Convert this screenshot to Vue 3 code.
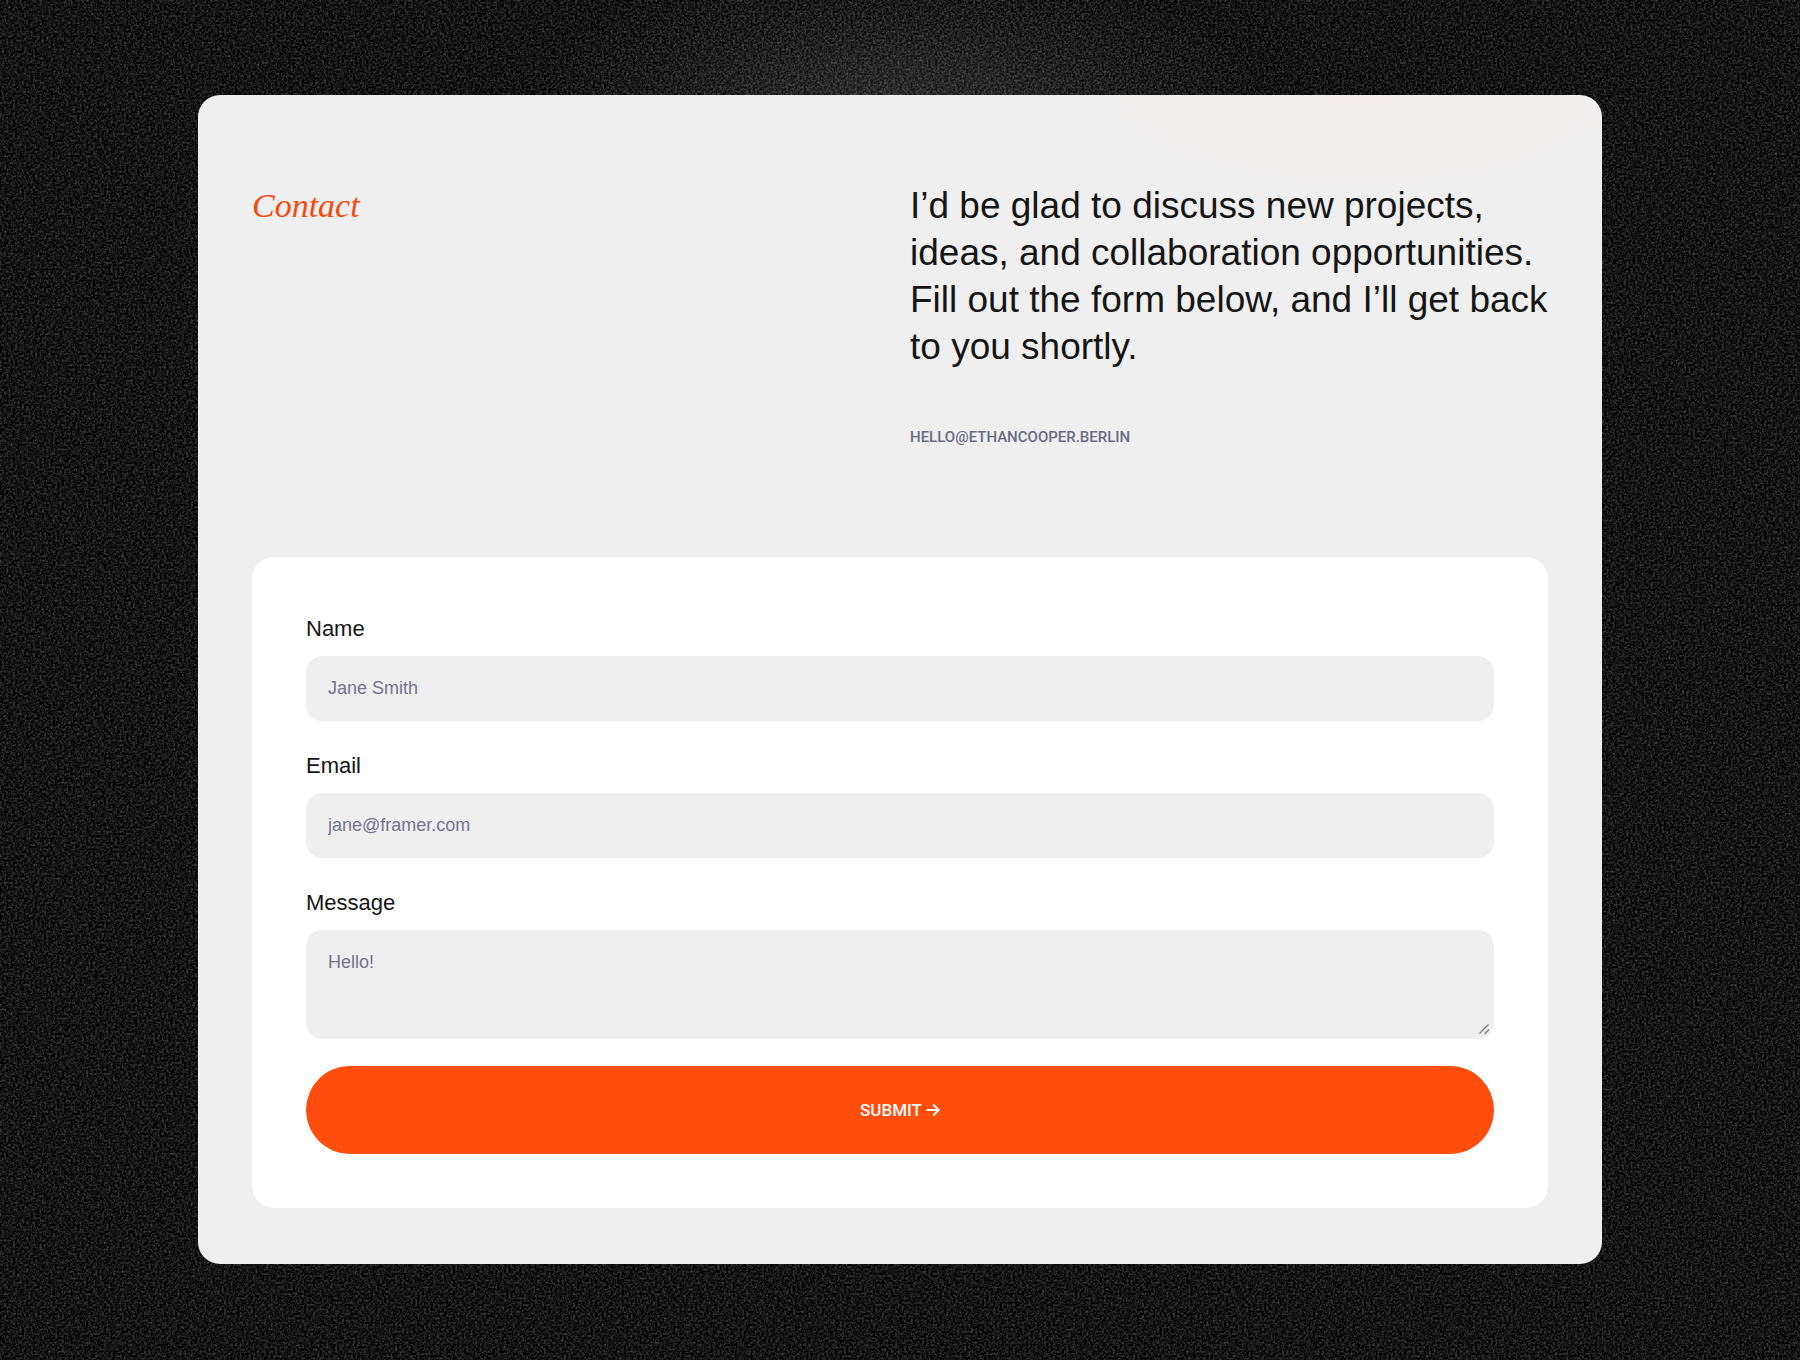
<script setup>
import { reactive } from 'vue'

const form = reactive({ name: '', email: '', message: '' })
</script>

<template>
  <main class="page">
    <svg class="grain" aria-hidden="true">
      <filter id="grain" x="0" y="0" width="100%" height="100%" color-interpolation-filters="sRGB">
        <feTurbulence type="fractalNoise" baseFrequency="0.45" numOctaves="2" seed="4" />
        <feColorMatrix
          type="matrix"
          values="0.48 0 0 0 -0.16
                  0.48 0 0 0 -0.16
                  0.48 0 0 0 -0.16
                  0 0 0 0 1"
        />
      </filter>
      <rect width="100%" height="100%" filter="url(#grain)" />
    </svg>

    <section class="card">
      <header class="intro">
        <h1 class="title">Contact</h1>
        <div class="pitch">
          <p class="lead">
            I’d be glad to discuss new projects,<br />
            ideas, and collaboration opportunities.<br />
            Fill out the form below, and I’ll get back<br />
            to you shortly.
          </p>
          <a class="mail" href="mailto:hello@ethancooper.berlin">HELLO@ETHANCOOPER.BERLIN</a>
        </div>
      </header>

      <form class="form" @submit.prevent>
        <div class="field">
          <label for="name">Name</label>
          <input id="name" v-model="form.name" type="text" placeholder="Jane Smith" />
        </div>
        <div class="field">
          <label for="email">Email</label>
          <input id="email" v-model="form.email" type="email" placeholder="jane@framer.com" />
        </div>
        <div class="field">
          <label for="message">Message</label>
          <div class="area">
            <textarea id="message" v-model="form.message" placeholder="Hello!"></textarea>
            <svg class="grip" width="12" height="12" viewBox="0 0 12 12" fill="none" stroke="#7c7c7c" stroke-width="1.3" aria-hidden="true">
              <path d="M1.5 10.5L10.5 1.5M6.5 11L11 6.5" />
            </svg>
          </div>
        </div>
        <button class="submit" type="submit">
          SUBMIT
          <svg width="14" height="14" viewBox="0 0 14 14" fill="none" stroke="currentColor" stroke-width="2" aria-hidden="true">
            <path d="M0.5 7H12.5M7.2 1.5L12.7 7L7.2 12.5" />
          </svg>
        </button>
      </form>
    </section>
  </main>
</template>

<style>
body {
  margin: 0;
  background: #141414;
}
</style>

<style scoped>
.page {
  position: relative;
  box-sizing: border-box;
  min-height: 100vh;
  padding: 95px 11%;
  background: #141414;
  font-family: "Liberation Sans", Arial, sans-serif;
  color: #161616;
}

.page::after {
  content: "";
  position: absolute;
  inset: 0;
  background: radial-gradient(380px 160px at 50% 120px, rgba(255, 255, 255, 0.12), rgba(255, 255, 255, 0.06) 50%, transparent);
}

.grain {
  position: absolute;
  inset: 0;
  width: 100%;
  height: 100%;
}

.card {
  position: relative;
  z-index: 1;
  box-sizing: border-box;
  padding: 87px 54px 56px;
  border-radius: 22px;
  background: radial-gradient(320px 110px at 83% 0, #f2edeb, transparent) #efefef;
}

.intro {
  display: grid;
  grid-template-columns: 1fr 1fr;
  gap: 20px;
  margin-bottom: 108px;
}

.title {
  margin: 0;
  font: italic 400 34px/47px "Liberation Serif", "Times New Roman", serif;
  color: #f9480c;
}

.pitch {
  display: flex;
  flex-direction: column;
  align-items: flex-start;
  gap: 55px;
}

.lead {
  margin: 0;
  font-size: 37px;
  line-height: 47px;
}

.mail {
  font: 500 15px/24px Roboto, sans-serif;
  color: #6b6b80;
  text-decoration: none;
}

.form {
  display: flex;
  flex-direction: column;
  gap: 27px;
  padding: 54px;
  border-radius: 22px;
  background: #fff;
}

.field {
  display: flex;
  flex-direction: column;
  gap: 9px;
}

.field label {
  font-size: 22px;
  line-height: 36px;
}

.field input,
.field textarea {
  box-sizing: border-box;
  width: 100%;
  height: 65px;
  margin: 0;
  padding: 0 22px;
  border: 0;
  border-radius: 16px;
  background: #efefef;
  font: 18px/26px "Liberation Sans", Arial, sans-serif;
  color: #161616;
}

.area {
  position: relative;
}

.field textarea {
  display: block;
  height: 109px;
  padding: 19px 22px;
  resize: vertical;
}

.field textarea::-webkit-resizer {
  background: transparent;
}

.grip {
  position: absolute;
  right: 4px;
  bottom: 4px;
  pointer-events: none;
}

.field ::placeholder {
  color: #74748a;
  opacity: 1;
}

.submit {
  display: flex;
  align-items: center;
  justify-content: center;
  gap: 4px;
  height: 88px;
  padding: 0;
  border: 0;
  border-radius: 44px;
  background: #ff4d0d;
  font: 500 17px/24px Roboto, sans-serif;
  color: #fff;
  cursor: pointer;
}
</style>
